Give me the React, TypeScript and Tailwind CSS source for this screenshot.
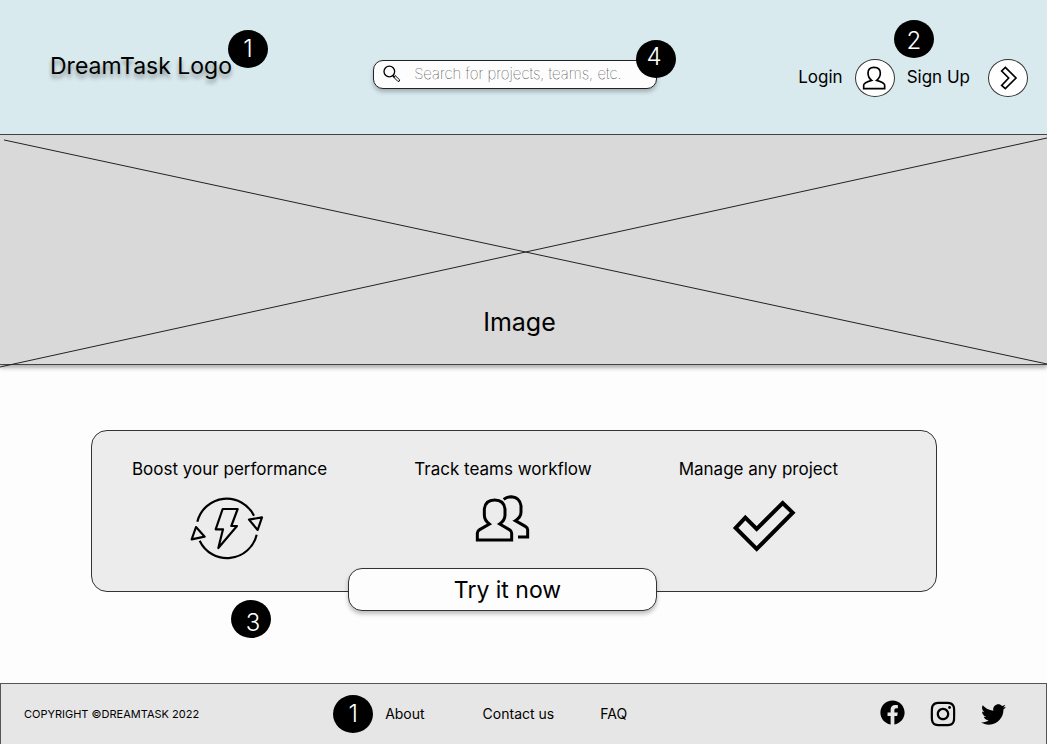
import type { ReactNode } from "react";
import { FaFacebook, FaInstagram, FaTwitter } from "react-icons/fa";

function Badge({ children, className = "" }: { children: ReactNode; className?: string }) {
  return (
    <span
      className={`flex h-[38px] w-10 items-center justify-center rounded-[50%] bg-black text-2xl font-light text-white ${className}`}
    >
      {children}
    </span>
  );
}

function SearchIcon() {
  return (
    <svg viewBox="60 100 60 56" className="h-[19px] w-5 shrink-0" fill="none" stroke="black" strokeWidth="4">
      <circle cx="82" cy="119" r="16" />
      <path d="M92 131 L98 137" />
      <path d="M99 131 L113 144 Q114 149 108 149 L95 136 Z" strokeWidth="3" strokeLinejoin="round" />
    </svg>
  );
}

function UserIcon() {
  return (
    <svg viewBox="235 160 75 78" className="h-[26px] w-[25px]" fill="none" stroke="black" strokeWidth="5">
      <path d="M240 231 V220 Q241 213 264 206 C254 199 253 192 253 184 Q253 167 271 167 Q290 167 290 184 C290 192 288 199 279 206 Q302 213 303 220 V231 Z" />
    </svg>
  );
}

function ChevronIcon() {
  return (
    <svg viewBox="642 164 60 78" className="h-[26px] w-5" fill="none" stroke="black" strokeWidth="5">
      <path d="M664 171 L696 203 L664 235 L653 225 L674 203 L653 182 Z" />
    </svg>
  );
}

function EnergyIcon() {
  return (
    <svg viewBox="60 135 225 201" className="h-[67px] w-[75px]" fill="none" stroke="black" strokeWidth="6.5" strokeLinejoin="round">
      <path d="M85 215 A91 91 0 0 1 255 197" />
      <path d="M92 272 A91 91 0 0 0 263 254" />
      <path d="M81 231 L107 260 L68 268 Z" />
      <path d="M240 209 L279 202 L266 240 Z" />
      <path d="M161 177 H206 L187 228 H204 L148 294 L162 238 H140 Z" />
    </svg>
  );
}

function TeamIcon() {
  return (
    <svg viewBox="225 126 171 150" className="h-[50px] w-[57px]" fill="none" stroke="black" strokeWidth="9">
      <path d="M235 267 V246 Q235 240 242 236 L271 219 C260 211 256 203 256 192 V174 Q259 147 287 147 Q315 147 318 174 V192 C318 203 314 211 302 219 L331 236 Q338 240 338 246 V267 Z" />
      <path d="M314 145 Q324 137 338 137 Q363 140 366 164 V184 C366 196 359 203 349 209 L379 226 Q386 230 386 236 V258 H357" />
    </svg>
  );
}

function CheckIcon() {
  return (
    <svg viewBox="186 148 192 162" className="h-[54px] w-16" fill="none" stroke="black" strokeWidth="12">
      <path d="M226 204 L260 238 L338 160 L368 189 L260 298 L197 235 Z" />
    </svg>
  );
}

export default function App() {
  return (
    <div className="flex min-h-screen flex-col bg-[#fdfdfd] font-['Inter',sans-serif] text-black">
      <header className="flex h-[135px] items-start justify-between border-b border-[#444] bg-[#d9eaee] pr-[19px] pl-[50px]">
        <div className="relative mt-12">
          <a href="#home" className="block text-[23px] leading-9 [text-shadow:0_4px_4px_rgba(0,0,0,0.4)]">
            DreamTask Logo
          </a>
          <Badge className="absolute -top-[18px] -right-9">1</Badge>
        </div>

        <form role="search" className="relative mt-[60px] w-[284px]">
          <label className="flex h-[29px] items-center gap-3 rounded-[10px] border border-[#222] bg-[#fdfdfd] pl-2 shadow-[0_3px_4px_rgba(0,0,0,0.25)]">
            <SearchIcon />
            <input
              type="search"
              aria-label="Search"
              placeholder="Search for projects, teams, etc."
              className="w-full min-w-0 bg-transparent text-[15px] font-thin outline-none placeholder:text-black"
            />
          </label>
          <Badge className="absolute -top-5 -right-[19px] pr-1 pb-1">4</Badge>
        </form>

        <nav aria-label="Account" className="relative mt-[59px] flex items-center text-[17px]">
          <a href="#login" className="flex items-center gap-3">
            Login
            <span className="flex h-[38px] w-10 items-center justify-center rounded-[50%] border border-[#333] bg-white">
              <UserIcon />
            </span>
          </a>
          <a href="#signup" className="ml-3 flex items-center gap-[18px]">
            Sign Up
            <span className="flex h-[38px] w-10 items-center justify-center rounded-[50%] border border-[#333] bg-white">
              <ChevronIcon />
            </span>
          </a>
          <Badge className="absolute -top-[39px] right-[94px] pt-1">2</Badge>
        </nav>
      </header>

      <section className="relative flex h-[230px] items-end justify-center border-b border-[#444] bg-[#d9d9d9] pr-2 pb-6 shadow-[0_3px_4px_rgba(0,0,0,0.3)]">
        <svg
          viewBox="0 0 1047 230"
          preserveAspectRatio="none"
          className="absolute inset-0 h-full w-full overflow-visible"
          stroke="#222"
          strokeWidth="1"
          aria-hidden="true"
        >
          <path d="M4 5 L1047 230 M0 233 L1047 3" vectorEffect="non-scaling-stroke" />
        </svg>
        <p className="text-[25px] leading-9">Image</p>
      </section>

      <main className="mb-[91px] pt-[65px] pr-[110px] pl-[91px]">
        <div className="relative flex h-[162px] justify-between rounded-2xl border border-[#333] bg-[#ececec] pt-6 pr-[98px] pl-10 text-[17px] leading-7">
          <section className="flex flex-col items-center">
            <h2>Boost your performance</h2>
            <div className="mt-3 mr-1.5">
              <EnergyIcon />
            </div>
          </section>
          <section className="flex flex-col items-center">
            <h2>Track teams workflow</h2>
            <div className="mt-2.5">
              <TeamIcon />
            </div>
          </section>
          <section className="flex flex-col items-center">
            <h2>Manage any project</h2>
            <div className="mt-4 ml-3">
              <CheckIcon />
            </div>
          </section>
          <button
            type="button"
            className="absolute -bottom-5 left-64 h-[43px] w-[309px] rounded-[14px] border border-[#333] bg-[#fdfdfd] pl-2.5 text-[23px] shadow-[0_3px_4px_rgba(0,0,0,0.25)]"
          >
            Try it now
          </button>
          <Badge className="absolute -bottom-[47px] left-[139px] pt-2 pl-1">3</Badge>
        </div>
      </main>

      <footer className="mt-auto flex h-[61px] items-center border border-b-0 border-[#555] bg-[#e6e6e6] pr-10 pl-[23px]">
        <small className="text-[11px]">COPYRIGHT ©DREAMTASK 2022</small>
        <nav aria-label="Footer" className="ml-[134px] flex items-center text-sm">
          <Badge>1</Badge>
          <a href="#about" className="ml-3">About</a>
          <a href="#contact" className="ml-[58px]">Contact us</a>
          <a href="#faq" className="ml-[46px]">FAQ</a>
        </nav>
        <div className="ml-auto flex items-center gap-6">
          <a href="#facebook" aria-label="Facebook"><FaFacebook className="-mt-1 size-[25px]" /></a>
          <a href="#instagram" aria-label="Instagram"><FaInstagram className="size-7" /></a>
          <a href="#twitter" aria-label="Twitter"><FaTwitter className="size-[25px]" /></a>
        </div>
      </footer>
    </div>
  );
}
